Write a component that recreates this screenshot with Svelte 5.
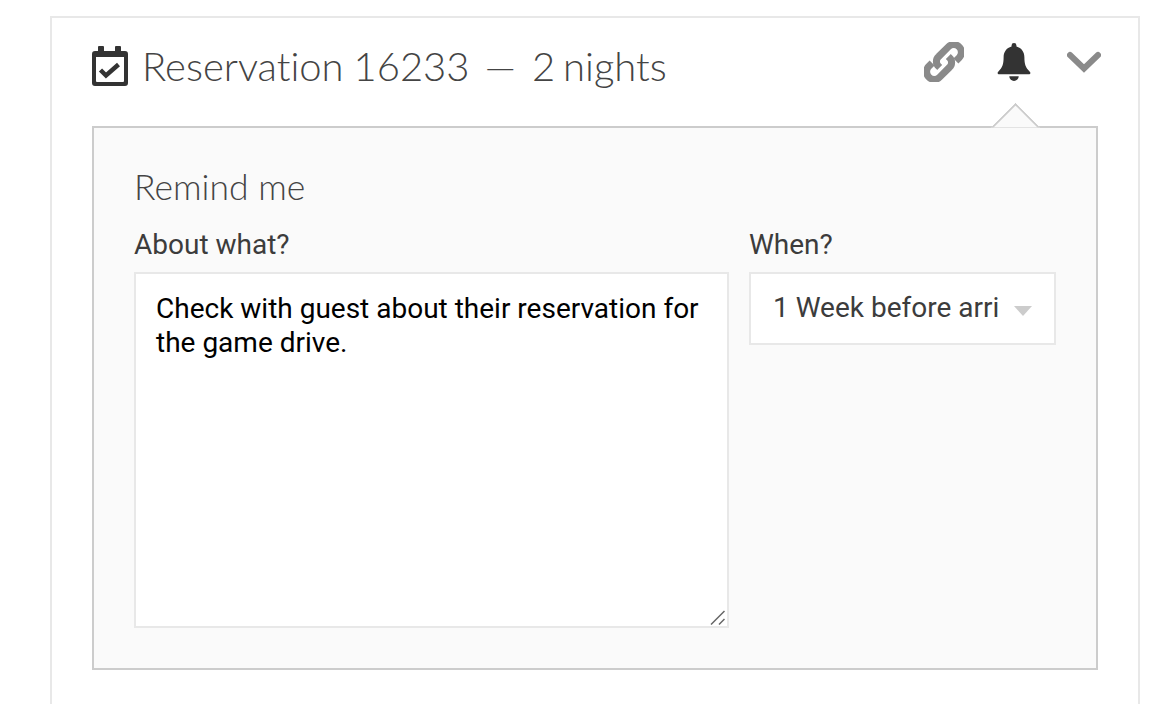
<script>
    let about = $state("Check with guest about their reservation for the game drive.");
    let when = $state("week");
</script>

<div class="page">
    <section class="card">
        <header class="head">
            <svg class="cal" viewBox="0 0 36 40" width="36" height="40">
                <path
                    fill="#333"
                    d="M7 0h4a1 1 0 0 1 1 1v4h11V1a1 1 0 0 1 1-1h4a1 1 0 0 1 1 1v4h4a3 3 0 0 1 3 3v29a3 3 0 0 1-3 3H3a3 3 0 0 1-3-3V8a3 3 0 0 1 3-3h3V1a1 1 0 0 1 1-1zM4 11v24a1 1 0 0 0 1 1h26a1 1 0 0 0 1-1V11z"
                />
                <path fill="none" stroke="#333" stroke-width="4.500" d="M8.500 24l5.500 5.500L26.500 18.500" />
            </svg>
            <h2>Reservation 16233<span class="dash">—</span><span class="nights">2 nights</span></h2>
            <div class="actions">
                <svg class="link" viewBox="2.500 2.500 37 37" width="40" height="40">
                    <g fill="none" stroke="#8a8a8a" stroke-width="6.500">
                        <path d="M17 26l-1-1a6 6 0 0 1 0-9l9-9a7 7 0 0 1 10 0a7 7 0 0 1 0 10l-3 3" />
                        <path d="M25 16l1 1a6 6 0 0 1 0 9l-9 9a7 7 0 0 1-10 0a7 7 0 0 1 0-10l3-3" />
                    </g>
                </svg>
                <svg class="bell" viewBox="0 1 36 40" width="34" height="40">
                    <path
                        fill="#333"
                        d="M18 1a2.600 2.600 0 0 1 2.600 2.600v1C26 6 29 10.500 29 16c0 8 1.500 11 5.500 15 1.500 1.500 1 3-1 3H2.500c-2 0-2.500-1.500-1-3C5.500 27 7 24 7 16c0-5.500 3-10 8.400-11.400v-1A2.600 2.600 0 0 1 18 1z"
                    />
                    <path fill="#333" d="M13 36h10a5 5 0 0 1-10 0z" />
                </svg>
                <svg class="chev" viewBox="0 0 34 22" width="34" height="22">
                    <path fill="none" stroke="#8a8a8a" stroke-width="6" stroke-linecap="round" d="M3 4l14 13.500L31 4" />
                </svg>
            </div>
        </header>

        <div class="panel">
            <span class="tip"></span>
            <h3>Remind me</h3>
            <div class="fields">
                <label class="about">
                    <span>About what?</span>
                    <div class="area">
                        <textarea bind:value={about}></textarea>
                        <svg class="grip" viewBox="0 0 15 15" width="15" height="15">
                            <path fill="none" stroke="#666" stroke-width="1.500" d="M1 14.500L14.500 1M9 14.500l5.500-5.500" />
                        </svg>
                    </div>
                </label>
                <label class="when">
                    <span>When?</span>
                    <div class="pick">
                        <select bind:value={when}>
                            <option value="week">1 Week before arrival</option>
                            <option value="day">1 Day before arrival</option>
                        </select>
                    </div>
                </label>
            </div>
        </div>
    </section>
</div>

<style>
    :global(body) {
        background: #fff;
        margin: 0;
    }

    .page {
        height: 704px;
        overflow: hidden;
        box-sizing: border-box;
        padding: 16px 14px 0 50px;
    }

    .card {
        border: 2px solid #e8e8e8;
        border-bottom: 0;
        height: 700px;
        box-sizing: border-box;
        padding: 0 40px;
    }

    .head {
        display: flex;
        align-items: center;
        height: 96px;
        margin-bottom: 12px;
    }

    .cal {
        margin-right: 14px;
    }

    h2 {
        font-family: Lato, sans-serif;
        font-weight: 300;
        font-size: 40px;
        margin: 0;
        white-space: nowrap;
        color: #444;
        font-variant-ligatures: none;
        word-spacing: -1px;
    }

    .dash {
        margin: 0 16px 0 15px;
    }

    .nights {
        word-spacing: -3px;
    }

    .actions {
        margin-left: auto;
        margin-right: -3px;
        margin-top: -9px;
        display: flex;
        align-items: center;
        gap: 33px;
    }

    .chev {
        margin-left: 3px;
    }

    .panel {
        position: relative;
        width: 1006px;
        height: 544px;
        box-sizing: border-box;
        border: 2px solid #ccc;
        background: #fafafa;
        padding: 40px 40px 0;
    }

    .tip {
        position: absolute;
        top: -18px;
        left: 904px;
        width: 35px;
        height: 35px;
        background: #fafafa;
        border-left: 2px solid #ccc;
        border-top: 2px solid #ccc;
        transform: rotate(45deg);
        box-sizing: border-box;
        clip-path: polygon(0 0, 100% 0, 0 100%);
    }

    h3 {
        font-family: Lato, sans-serif;
        font-weight: 300;
        font-size: 35.500px;
        line-height: 40px;
        margin: -1px 0 22px;
        color: #444;
        font-variant-ligatures: none;
    }

    .fields {
        display: flex;
        gap: 20px;
    }

    label {
        display: flex;
        flex-direction: column;
        font-family: Roboto, sans-serif;
        font-size: 28px;
        line-height: 32px;
        color: #3c3c3c;
    }

    label span {
        margin-bottom: 11px;
    }

    .about {
        width: 595px;
    }

    .when {
        width: 307px;
    }

    .area {
        position: relative;
        height: 356px;
    }

    textarea {
        display: block;
        box-sizing: border-box;
        width: 595px;
        height: 356px;
        border: 2px solid #e8e8e8;
        background: #fff;
        padding: 18px 20px;
        font-family: Roboto, sans-serif;
        font-size: 28px;
        line-height: 34px;
        color: #000;
        margin: 0;
        outline: none;
        resize: none;
    }

    .grip {
        position: absolute;
        right: 4px;
        bottom: 3px;
    }

    .pick {
        position: relative;
    }

    .pick::after {
        content: "";
        position: absolute;
        left: 265px;
        top: 34px;
        border-left: 9.500px solid transparent;
        border-right: 9.500px solid transparent;
        border-top: 10px solid #ccc;
    }

    select {
        appearance: none;
        display: block;
        box-sizing: border-box;
        width: 307px;
        height: 73px;
        border: 2px solid #e8e8e8;
        border-radius: 0;
        background: #fff;
        padding: 0 56px 2px 22px;
        font-family: Roboto, sans-serif;
        font-size: 28px;
        color: #3c3c3c;
        outline: none;
    }
</style>
